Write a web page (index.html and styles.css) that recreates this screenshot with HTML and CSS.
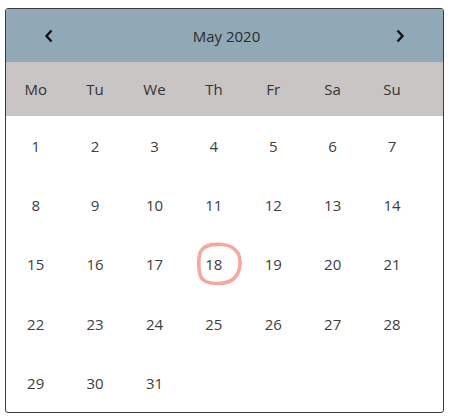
FILE: index.html
```html
<!DOCTYPE html>
<html>
<head>
<meta charset="utf-8">
<link rel="stylesheet" href="styles.css">
</head>
<body>
<div class="cal">
  <div class="head">
    <span class="nav"><svg width="10" height="14" viewBox="0 0 10 14"><polyline points="7.5,1.5 2.5,7 7.5,12.5" fill="none" stroke="#111" stroke-width="2.4"/></svg></span>
    <span class="title">May 2020</span>
    <span class="nav"><svg width="10" height="14" viewBox="0 0 10 14"><polyline points="2.5,1.5 7.5,7 2.5,12.5" fill="none" stroke="#111" stroke-width="2.4"/></svg></span>
  </div>
  <div class="week">
    <span>Mo</span><span>Tu</span><span>We</span><span>Th</span><span>Fr</span><span>Sa</span><span>Su</span>
  </div>
  <div class="days">
    <span>1</span><span>2</span><span>3</span><span>4</span><span>5</span><span>6</span><span>7</span>
    <span>8</span><span>9</span><span>10</span><span>11</span><span>12</span><span>13</span><span>14</span>
    <span>15</span><span>16</span><span>17</span><span class="today">18<svg class="ring" width="46" height="44" viewBox="0 0 46 44"><path d="M6 7 C10 2 18 2 26 2.5 C34 3 38 6 42 12 C44 18 44 26 41 32 C37 39 30 41.5 22 41.5 C14 41.5 6 40 4 34 C2 28 2 19 3 13 C4 8 8 4.5 13 3.5" fill="none" stroke="#f3998e" stroke-width="3.6" stroke-linecap="round" stroke-linejoin="round" opacity="0.85"/></svg></span><span>19</span><span>20</span><span>21</span>
    <span>22</span><span>23</span><span>24</span><span>25</span><span>26</span><span>27</span><span>28</span>
    <span>29</span><span>30</span><span>31</span>
  </div>
</div>
</body>
</html>
```

FILE: styles.css
```css
html, body {
  margin: 0;
  padding: 0;
  background: #fff;
}
body {
  font-family: "Open Sans", "Noto Sans", sans-serif;
  color: #333;
}
.cal {
  margin: 8px 0 0 5px;
  width: 437px;
  height: 403px;
  border: 1px solid #3a3a3a;
  border-radius: 3px;
  overflow: hidden;
  box-sizing: content-box;
}
.head {
  height: 53px;
  background: #91a9b6;
  display: flex;
  align-items: center;
  justify-content: space-between;
  padding: 0 38px 0 38px;
}
.nav {
  width: 10px;
  height: 14px;
  display: flex;
}
.title {
  font-size: 15px;
  color: #2a2a2a;
  margin-left: 4px;
}
.week {
  height: 54px;
  background: #cac5c5;
  display: grid;
  grid-template-columns: repeat(7, 59.4px);
  align-items: center;
  font-size: 15px;
  color: #333;
}
.week span, .days span {
  text-align: center;
}
.days {
  display: grid;
  grid-template-columns: repeat(7, 59.4px);
  grid-auto-rows: 59.3px;
  align-items: center;
  font-size: 15px;
  color: #3d3d3d;
}
.today {
  position: relative;
}
.ring {
  position: absolute;
  left: 50%;
  top: 50%;
  transform: translate(-17.5px, -22px);
}
```
